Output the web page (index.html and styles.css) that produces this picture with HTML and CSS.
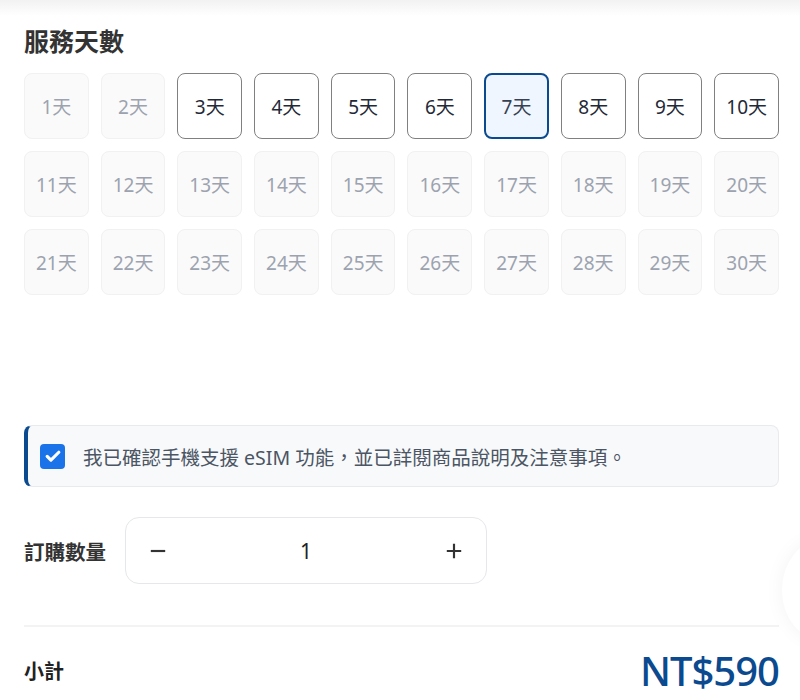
FILE: index.html
```html
<!DOCTYPE html>
<html lang="zh-Hant">
<head>
    <meta charset="UTF-8">
    <meta name="viewport" content="width=device-width, initial-scale=1.0">
    <title>服務天數</title>
    <link rel="stylesheet" href="styles.css">
</head>
<body>
    <div class="top-shade"></div>
    <div class="panel">
        <h2 class="section-title">服務天數</h2>
        <div class="day-grid">
            <button class="day off">1天</button>
            <button class="day off">2天</button>
            <button class="day">3天</button>
            <button class="day">4天</button>
            <button class="day">5天</button>
            <button class="day">6天</button>
            <button class="day active">7天</button>
            <button class="day">8天</button>
            <button class="day">9天</button>
            <button class="day">10天</button>
            <button class="day off">11天</button>
            <button class="day off">12天</button>
            <button class="day off">13天</button>
            <button class="day off">14天</button>
            <button class="day off">15天</button>
            <button class="day off">16天</button>
            <button class="day off">17天</button>
            <button class="day off">18天</button>
            <button class="day off">19天</button>
            <button class="day off">20天</button>
            <button class="day off">21天</button>
            <button class="day off">22天</button>
            <button class="day off">23天</button>
            <button class="day off">24天</button>
            <button class="day off">25天</button>
            <button class="day off">26天</button>
            <button class="day off">27天</button>
            <button class="day off">28天</button>
            <button class="day off">29天</button>
            <button class="day off">30天</button>
        </div>

        <label class="confirm">
            <span class="check">
                <svg viewBox="0 0 24 24" width="20" height="20">
                    <path d="M5 12.5l4.5 4.5L19 7.5" fill="none" stroke="#fff" stroke-width="3.8" stroke-linecap="round" stroke-linejoin="round"/>
                </svg>
            </span>
            <span class="confirm-text">我已確認手機支援 eSIM 功能，並已詳閱商品說明及注意事項。</span>
        </label>

        <div class="qty-row">
            <span class="qty-label">訂購數量</span>
            <div class="stepper">
                <button class="step">
                    <svg viewBox="0 0 20 20" width="18" height="18"><path d="M2 10h16" stroke="#333" stroke-width="2.4"/></svg>
                </button>
                <span class="qty-value">1</span>
                <button class="step">
                    <svg viewBox="0 0 20 20" width="18" height="18"><path d="M2 10h16M10 2v16" stroke="#333" stroke-width="2.4"/></svg>
                </button>
            </div>
        </div>

        <hr class="divider">

        <div class="total-row">
            <span class="total-label">小計</span>
            <span class="total-price">NT$590</span>
        </div>
    </div>
    <div class="fab-shadow"></div>
</body>
</html>
```

FILE: styles.css
```css
body {
    margin: 0;
    background: #fff;
    font-family: "Noto Sans", "Noto Sans CJK TC", sans-serif;
    color: #1f2937;
    overflow: hidden;
}
.top-shade {
    height: 16px;
    background: linear-gradient(#f2f2f2, #fff);
}
.panel {
    padding: 0 21px 0 24px;
}
.section-title {
    margin: 8px 0 15px;
    font-size: 25px;
    font-weight: 700;
    line-height: 34px;
    color: #333;
}
.day-grid {
    display: grid;
    grid-template-columns: repeat(10, 1fr);
    gap: 12px;
}
.day {
    height: 66px;
    border: 1px solid #808080;
    border-radius: 8px;
    background: #fff;
    font-family: inherit;
    font-size: 19px;
    color: #1f2937;
    padding: 0;
}
.day.off {
    background: #fafafa;
    border-color: #f1f1f1;
    color: #9ca3af;
}
.day.active {
    border: 2px solid #0b4a8f;
    background: #eff6ff;
    color: #374151;
}
.confirm {
    display: flex;
    align-items: center;
    gap: 18px;
    margin-top: 130px;
    height: 60px;
    padding-left: 12px;
    background: #f8f9fb;
    border: 1px solid #e8eaee;
    border-left: 4px solid #0b4a8f;
    border-radius: 8px;
}
.check {
    width: 25px;
    height: 25px;
    border-radius: 4px;
    background: #1a73e8;
    display: flex;
    align-items: center;
    justify-content: center;
}
.confirm-text {
    font-size: 19.5px;
    color: #4b5563;
}
.qty-row {
    display: flex;
    align-items: center;
    gap: 19px;
    margin-top: 30px;
}
.qty-label {
    font-size: 20.5px;
    font-weight: 700;
    color: #333;
}
.stepper {
    display: flex;
    align-items: center;
    justify-content: space-between;
    width: 362px;
    height: 67px;
    box-sizing: border-box;
    border: 1px solid #e5e7eb;
    border-radius: 14px;
    padding: 0 20px;
}
.step {
    border: none;
    background: none;
    padding: 0;
    width: 24px;
    display: flex;
    justify-content: center;
}
.qty-value {
    font-size: 21px;
    color: #222;
}
.divider {
    margin: 41px 0 0;
    border: none;
    border-top: 2px solid #f3f3f3;
}
.total-row {
    display: flex;
    justify-content: space-between;
    align-items: center;
    margin-top: 16px;
}
.total-label {
    font-size: 20px;
    font-weight: 700;
    color: #222;
}
.total-price {
    font-size: 40px;
    font-weight: 500;
    color: #0b4a8f;
    letter-spacing: -1px;
}
.fab-shadow {
    position: fixed;
    right: -62px;
    top: 540px;
    width: 80px;
    height: 100px;
    border-radius: 50%;
    box-shadow: 0 0 20px rgba(0, 0, 0, 0.05);
}
```
